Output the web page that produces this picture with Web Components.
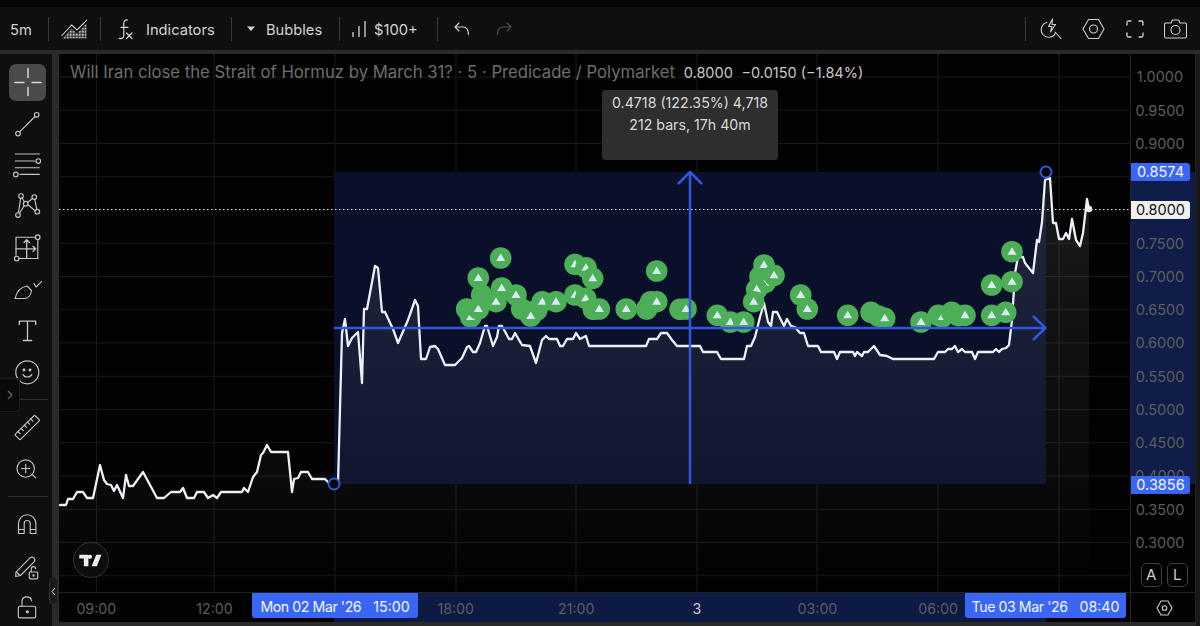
<!doctype html>
<html>
<head>
<meta charset="utf-8">
<title>Chart</title>
<style>
  html, body { margin: 0; height: 100%; background: #050505; overflow: hidden; }
  body { font-family: Inter, "Liberation Sans", sans-serif; }
</style>
</head>
<body>
<tv-app></tv-app>
<script>
const ico = (body, w = 37, h = 37) =>
  `<svg width="${w}" height="${h}" viewBox="0 0 ${w} ${h}" fill="none" stroke="currentColor" stroke-width="1.15" stroke-linecap="round" stroke-linejoin="round">${body}</svg>`

const toolIcons = {
  cross: '<path d="M19 4.500v9M19 23.500v8M6 18.500h9M23 18.500h9" stroke-width="1.500"/>',
  line: '<circle cx="27.700" cy="9.800" r="2.300"/><circle cx="9" cy="28.500" r="2.300"/><path d="M26 11.500 10.700 26.800"/>',
  fib: '<path d="M6.300 7h24M6.300 14h19.500M6.300 20.700h24M11 27.400h19.300"/><circle cx="29.300" cy="14" r="2.300"/><circle cx="6.800" cy="27.400" r="2.300"/>',
  pattern: '<circle cx="12" cy="8" r="2.300"/><circle cx="25.300" cy="9" r="2.300"/><circle cx="16.700" cy="15.700" r="2.300"/><circle cx="28.300" cy="23.700" r="2.300"/><circle cx="9" cy="27" r="2.300"/><path d="m13 10 2.500 3.700M23.500 10.500l-5 4M11.700 10.300 9.400 24.700M25.800 11.300l2 10M10.500 25l4.800-7.400M26.200 22.800l-7.400-6"/>',
  rect: '<path d="M26.500 7.200H7v18M9.800 28.500h19v-19"/><circle cx="28.700" cy="7.200" r="2.300"/><circle cx="7.700" cy="28.500" r="2.300"/><path d="M17.700 10v17.500M7 18.800h19.500M15 12.500l2.700-2.700 2.700 2.700M24 16.200l2.700 2.600-2.700 2.600" stroke-width="1.300"/>',
  brush: '<path d="M6 27.500c1.600-6.500 6-11.500 12-12.500l4.500 4.500c-.5 4.800-3.500 8-7.500 8z"/><path d="m25 12.500 2 3.500 5.700-5.700"/>',
  text: '<path d="M10.300 11.500V8.200h16.400v3.300M18.500 8.200v19.300M14.300 27.500h8.400" stroke-width="1.300"/>',
  smile: '<circle cx="18.300" cy="18.300" r="11.500"/><path d="M14 20.500c1.300 3.300 7.400 3.300 8.800 0"/><circle cx="15" cy="16" r=".9" fill="currentColor"/><circle cx="21" cy="16" r=".9" fill="currentColor"/>',
  ruler: '<g transform="rotate(-45 18.300 15.500)"><rect x="4.300" y="11.800" width="28" height="7.400" rx=".8"/><path d="M8.800 11.800v3M13.300 11.800v3M17.800 11.800v3M22.300 11.800v3M26.800 11.800v3"/></g>',
  zoom: '<circle cx="16.700" cy="19.500" r="8.700"/><path d="m23.300 25.500 3.400 3.300M16.700 15.300v8.400M12.500 19.500h8.400"/>',
  magnet: '<path d="M9.500 27.500V17.500a8.700 8.700 0 0 1 17.400 0v10h-5.700V17.500a3 3 0 0 0-6 0v10zM9.500 23.500h5.700M21.200 23.500h5.700"/>',
  pencil: '<path d="m7 24.200 14-14.300c1.400-1.300 3.100-.7 4 .3.900 1 1.200 2.600 0 3.700L11.500 27.500 6.700 28.500z"/><path d="M8 24.500l3 3"/><rect x="20.300" y="24" width="8.400" height="6.800" rx=".8"/><path d="M22.300 24v-3.200c0-2.800 4-2.800 4.300-.2"/><circle cx="24.500" cy="27.500" r=".6" fill="currentColor"/>',
  lock: '<rect x="9.300" y="17.200" width="17.400" height="11.700" rx="1.500"/><path d="M13 17v-5c0-5.500 9-5.500 9.500-.3"/><circle cx="18.300" cy="22.800" r="1" fill="currentColor"/>',
}

class TvTool extends HTMLElement {
  connectedCallback() {
    const name = this.getAttribute('icon')
    this.attachShadow({ mode: 'open' }).innerHTML = `
      <style>
        :host { display: block; width: 37px; height: 37px; color: #c4c4c4; border-radius: 7px; }
        :host([active]) { background: #4a4a4a; color: #d6d6d6; }
        svg { display: block; }
      </style>${ico(toolIcons[name])}`
  }
}

class TvSidebar extends HTMLElement {
  constructor() {
    super()
    const tool = n => `<tv-tool icon="${n}"${n === 'cross' ? ' active' : ''}></tv-tool>`
    this.attachShadow({ mode: 'open' }).innerHTML = `
      <style>
        :host { display: flex; flex-direction: column; width: 52px; padding: 9.500px 0 0 9px; box-sizing: border-box;
          background: #0f0f0f; position: relative; overflow: hidden; flex: none; }
        .group { display: flex; flex-direction: column; gap: 4.500px; }
        .tight { gap: 0; }
        hr { border: 0; height: 1px; background: #333; width: 40px; margin: 0 0 0 -1px; }
        .a { margin-top: 8px; margin-bottom: 12px; }
        .b { margin-top: 10px; margin-bottom: 10px; }
        .open { position: absolute; left: 0; top: 324px; width: 20px; height: 34px; box-sizing: border-box;
          background: #0a0a0a; border: 1px solid #1c1c1c; border-left: 0; border-radius: 0 3px 3px 0;
          display: flex; align-items: center; justify-content: center; color: #6a6a6a; }
      </style>
      <div class="group">${['cross','line','fib','pattern','rect','brush','text','smile'].map(tool).join('')}</div>
      <hr class="a">
      <div class="group tight">${['ruler','zoom'].map(tool).join('')}</div>
      <hr class="b">
      <div class="group">${['magnet','pencil','lock'].map(tool).join('')}</div>
      <div class="open"><svg width="8" height="10" viewBox="0 0 8 10" fill="none" stroke="currentColor" stroke-width="1.100"><path d="m2 1 4 4-4 4"/></svg></div>`
  }
}

class TvToolbar extends HTMLElement {
  constructor() {
    super()
    this.attachShadow({ mode: 'open' }).innerHTML = `
      <style>
        :host { display: flex; align-items: center; height: 43px; background: #0f0f0f; color: #d4d4d4;
          font: 14.700px/20px Inter, "Liberation Sans", sans-serif; padding-left: 10px; }
        i { display: block; width: 1px; height: 24px; background: #3a3a3a; flex: none; }
        svg { display: block; flex: none; }
        span { white-space: nowrap; margin-top: 2px; }
        .sp { flex: 1; }
      </style>
      <span style="width:22px">5m</span>
      <i style="margin-left:16px"></i>
      <svg style="margin-left:12px" width="26" height="20" viewBox="0 0 26 20" fill="none">
        <defs><pattern id="ht" width="1.500" height="1.500" patternUnits="userSpaceOnUse"><rect width="1" height="1" fill="#dcdcdc"/></pattern></defs>
        <path d="M1.500 19.500 10.700 9.500l5.300 5 9.500-10v15z" fill="url(#ht)"/>
        <path d="M.5 17 10.700 6 16 11 26 1" stroke="#d4d4d4" stroke-width="1.100"/>
      </svg>
      <i style="margin-left:13px"></i>
      <svg style="margin-left:17px" width="16" height="22" viewBox="0 0 16 22" fill="none" stroke="#d4d4d4" stroke-width="1.200" stroke-linecap="round">
        <path d="M9.500 2C7 1.500 6 3 5.800 5v12.500c0 2.500-2 3.500-4.500 2.800M3 9.300h7M8.500 15l5.500 5.500M14 15l-5.500 5.500"/>
      </svg>
      <span style="margin-left:12px;width:69px">Indicators</span>
      <i style="margin-left:16px"></i>
      <svg style="margin-left:15px" width="8" height="6" viewBox="0 0 8 6"><path d="M0 .5h8L4 5z" fill="#d4d4d4"/></svg>
      <span style="margin-left:11px;width:57px">Bubbles</span>
      <i style="margin-left:16px"></i>
      <svg style="margin-left:12px" width="14" height="18" viewBox="0 0 14 18" stroke="#d4d4d4" stroke-width="1.300" fill="none"><path d="M1 17v-5M7 17V6M13 17V1"/></svg>
      <span style="margin-left:8px;width:47px">$100+</span>
      <i style="margin-left:16px"></i>
      <svg style="margin-left:16px" width="16" height="14" viewBox="0 0 16 14" fill="none" stroke="#cfcfcf" stroke-width="1.100" stroke-linecap="round" stroke-linejoin="round"><path d="M5 1 1 5l4 4M1 5h8c3.500 0 5.500 2.500 5.500 7.500"/></svg>
      <svg style="margin-left:26px" width="16" height="14" viewBox="0 0 16 14" fill="none" stroke="#4c4c4c" stroke-width="1.100" stroke-linecap="round" stroke-linejoin="round"><path d="m11 1 4 4-4 4M15 5H7C3.500 5 1.500 7.500 1.500 12.500"/></svg>
      <div class="sp"></div>
      <i></i>
      <svg style="margin-left:14px" width="22" height="22" viewBox="0 0 22 22" fill="none" stroke="#cfcfcf" stroke-width="1.100" stroke-linecap="round" stroke-linejoin="round"><path d="M7 4.500a7.500 7.500 0 1 0 8.500 10.500M15 14l6 6.500"/><path d="M12.500 1 8.500 8.500h3.500L10.500 14l5-7.500H12z"/></svg>
      <svg style="margin-left:20px" width="23" height="22" viewBox="0 0 23 22" fill="none" stroke="#cfcfcf" stroke-width="1.100" stroke-linejoin="round"><path d="M6.500 1.500h10L22 11l-5.500 9.500h-10L1 11z"/><circle cx="11.500" cy="11" r="4"/></svg>
      <svg style="margin-left:21px" width="18" height="18" viewBox="0 0 18 18" fill="none" stroke="#cfcfcf" stroke-width="1.300" stroke-linecap="round"><path d="M1 5V2.500C1 1.500 1.500 1 2.500 1H5M13 1h2.500c1 0 1.500.5 1.500 1.500V5M17 13v2.500c0 1-.5 1.500-1.500 1.500H13M5 17H2.500C1.500 17 1 16.500 1 15.500V13"/></svg>
      <svg style="margin-left:20px;margin-right:13px" width="23" height="20" viewBox="0 0 23 20" fill="none" stroke="#cfcfcf" stroke-width="1.100" stroke-linejoin="round"><path d="M7 4 8.500 1h6L16 4h5c1 0 1.500.5 1.500 1.500v12c0 1-.5 1.500-1.500 1.500H2c-1 0-1.500-.5-1.500-1.500v-12C.5 4.500 1 4 2 4z"/><circle cx="11.500" cy="11" r="4.500"/></svg>`
  }
}

// chart data, in page pixels
const LINE = [[60,505],[66,505],[68,499],[73,499],[77,492],[83,492],[87,498],[93,498],[100,465],[104,480],[107,484],[111,485],[114,491],[117,485],[123,498],[126,475],[129,486],[133,486],[143,472],[157,498],[164,498],[171,492],[180,492],[183,488],[187,498],[194,498],[197,492],[204,492],[208,498],[213,495],[217,498],[221,492],[242,492],[244,488],[248,492],[253,477],[257,472],[261,455],[263,453],[267,445],[271,452],[288,452],[292,492],[294,479],[298,478],[301,472],[308,472],[312,479],[325,479],[330,484],[338,484],[342,333],[345,319],[348,346],[352,338],[358,332],[362,383],[364,309],[367,309],[375,266],[378,268],[382,312],[385,312],[393,329],[398,343],[408,320],[415,300],[418,306],[421,359],[426,359],[430,347],[435,346],[438,349],[445,365],[455,365],[462,358],[467,347],[469,346],[473,352],[476,352],[480,343],[485,326],[487,326],[493,346],[497,337],[499,326],[502,326],[509,339],[512,339],[515,333],[522,345],[530,346],[536,363],[542,340],[546,336],[549,339],[557,339],[560,346],[563,346],[567,339],[573,339],[576,333],[580,339],[586,336],[589,346],[646,346],[649,339],[657,339],[661,333],[667,333],[672,340],[677,346],[700,346],[703,352],[717,352],[721,359],[744,359],[747,346],[751,346],[755,337],[760,317],[764,303],[768,322],[771,326],[773,312],[777,312],[784,326],[787,319],[791,326],[795,327],[800,333],[804,333],[808,346],[818,346],[821,352],[834,352],[837,359],[840,352],[853,352],[855,356],[857,352],[862,356],[864,352],[868,352],[874,346],[880,355],[887,356],[893,359],[934,359],[938,352],[945,352],[948,349],[952,349],[955,346],[958,352],[962,349],[965,352],[972,352],[975,359],[978,352],[993,352],[996,349],[999,352],[1002,349],[1006,348],[1009,345],[1012,320],[1015,273],[1018,257],[1023,257],[1025,263],[1033,273],[1037,240],[1039,242],[1042,222],[1045,180],[1050,178],[1053,223],[1056,223],[1059,239],[1063,239],[1066,233],[1069,239],[1072,219],[1076,240],[1080,246],[1083,233],[1087,199],[1089,209]]

// x, y, and 0 where the marker's triangle sits under its neighbours
const BUBBLES = [[500.700,258],[478.300,278],[466.700,309,0],[470.700,317],[478.300,309],[481.700,295,0],[501.700,288],[496,301.700],[516,295],[521.700,309,0],[536.700,310,0],[530.700,316],[542.300,301.700],[556,301.700],[575,264.300],[586,267.700],[592.700,278.300],[575,295],[585.700,298.300],[593.300,309.300,0],[599.300,309],[626.300,309],[646.700,309,0],[650.700,301.700,0],[656.700,301.700],[656.700,271],[680,309.300,0],[686,309],[730.300,322],[717.300,315.300],[743.700,322],[760,276.700,0],[765,282.700],[756.700,289.300],[753.700,301.700],[764,265],[774,275.300],[800.700,295],[807.300,309],[847.700,315.300],[871,312.300,0],[878.300,316,0],[884.700,318.300],[938.300,315.300,0],[942.300,317],[951.700,312.300,0],[958.300,315.700,0],[965,315.300],[921,322],[991.700,285],[991.700,315.300],[1005.700,312.300],[1012,281.700],[1012,251.700]]

class TvPlot extends HTMLElement {
  constructor() {
    super()
    const pts = LINE.map(p => p.join(',')).join(' ')
    const grid = []
    for (let i = -1; i < 16; i++) { const y = 77 + i * 33.25; grid.push(`<path d="M59 ${y}H1131"/>`) }
    for (const x of [96.500, 214, 335, 456, 576, 697, 817, 938, 1059]) grid.push(`<path d="M${x} 54V592"/>`)
    const bubbles = BUBBLES.map(([x, y, tri]) => `
      <circle cx="${x}" cy="${y}" r="10.800" fill="#4caf58"/>
      ${tri === 0 ? '' : `<path d="M${x} ${y - 4.500}l4.500 7.500h-9z" fill="#dbe9f3"/>`}`).join('')
    this.attachShadow({ mode: 'open' }).innerHTML = `
      <style>
        :host { display: block; position: relative; flex: 1; background: #020202; overflow: hidden; }
        svg { display: block; }
        .legend { position: absolute; left: 11px; top: 8px; font-size: 16.700px; line-height: 20px; color: #6d6d6d; white-space: nowrap; }
        .legend b { font-weight: 400; color: #c9c9c9; font-size: 14.500px; margin-left: 4px; }
        .tip { position: absolute; left: 543px; top: 36px; width: 176px; height: 70px; box-sizing: border-box; padding-top: 2px;
          background: #2e2e2e; border-radius: 4px; color: #d9d9d9; font-size: 14.200px; line-height: 22px; text-align: center; }
        .logo { position: absolute; left: 14px; top: 488px; width: 36px; height: 36px; box-sizing: border-box; border-radius: 50%;
          border: 1.500px solid #333; background: #0d0d0d; display: flex; align-items: center; justify-content: center; }
      </style>
      <svg width="1072" height="538" viewBox="59 54 1072 538" fill="none">
        <defs>
          <linearGradient id="under" gradientUnits="userSpaceOnUse" x1="0" y1="170" x2="0" y2="592">
            <stop offset="0" stop-color="#fff" stop-opacity=".1"/>
            <stop offset=".45" stop-color="#fff" stop-opacity=".055"/>
            <stop offset=".75" stop-color="#fff" stop-opacity=".03"/>
            <stop offset="1" stop-color="#fff" stop-opacity="0"/>
          </linearGradient>
        </defs>
        <g stroke="#191919" stroke-width="1">${grid.join('')}</g>
        <rect x="334" y="172" width="712" height="312" fill="#0a112b" fill-opacity=".96"/>
        <polygon points="${pts} 1089,592 60,592" fill="url(#under)"/>
        <polyline points="${pts}" stroke="#eef0f8" stroke-width="2.300" stroke-linejoin="round" stroke-linecap="round"/>
        <circle cx="1089" cy="209" r="3.200" fill="#f2f2f2"/>
        ${bubbles}
        <g stroke="#3157e0" stroke-width="2.500" stroke-linejoin="round">
          <path d="M334 328H1045M1033 316l12.500 12-12.500 12"/>
          <path d="M690 484V173M678 184l12-12 12 12"/>
          <circle cx="334" cy="484" r="5.500" fill="#06060a" stroke-width="2"/>
          <circle cx="1046" cy="172" r="5.500" fill="#06060a" stroke-width="2"/>
        </g>
        <path d="M59 209.500H1131" stroke="#e8e8e8" stroke-width="1" stroke-dasharray="1.500 2.500"/>
      </svg>
      <div class="legend">Will Iran close the Strait of Hormuz by March 31? · 5 · Predicade / Polymarket <b>0.8000</b> <b>−0.0150 (−1.84%)</b></div>
      <div class="tip">0.4718 (122.35%) 4,718<br>212 bars, 17h 40m</div>
      <div class="logo"><svg width="24" height="13" viewBox="0 0 36 20" fill="#f0f0f0"><path d="M14 1H0v6h7v12h7zM27 19h-8l7-18h8zM16.500 7.500a3.200 3.200 0 1 0 0-6.400 3.200 3.200 0 0 0 0 6.400z"/></svg></div>`
  }
}

class TvPriceAxis extends HTMLElement {
  constructor() {
    super()
    const ticks = []
    // 0.85 always sits under the range label, its row stays empty
    for (let v = 100; v >= 30; v -= 5) ticks.push(`<div class="t">${v === 85 ? '' : (v / 100).toFixed(4)}</div>`)
    this.attachShadow({ mode: 'open' }).innerHTML = `
      <style>
        :host { display: block; position: relative; width: 66px; flex: none; box-sizing: border-box;
          background: #020202; border-left: 1px solid #222; border-right: 1px solid #222; padding-top: 6.400px;
          overflow: hidden; font-size: 14.500px; }
        .band { position: absolute; left: 0; right: 0; top: 118px; height: 312px; background: #0f1d48; }
        .list { position: relative; }
        .t { height: 33.250px; line-height: 33.250px; text-align: center; color: #5d5d5d; padding-right: 6px; }
        .lab { position: absolute; left: 0; width: 59px; height: 18px; line-height: 18px; text-align: center;
          border-radius: 0 3px 3px 0; background: #3a66f5; color: #f4f6ff; }
        .cur { background: #f0f0f0; color: #111; }
        .btn { position: absolute; top: 509px; width: 21px; height: 24px; box-sizing: border-box; border: 1px solid #3f3f3f;
          border-radius: 5px; color: #cdcdcd; text-align: center; line-height: 22px; font-size: 15px; }
      </style>
      <div class="band"></div>
      <div class="list">${ticks.join('')}</div>
      <div class="lab" style="top:109px">0.8574</div>
      <div class="lab cur" style="top:147px">0.8000</div>
      <div class="lab" style="top:422px">0.3856</div>
      <div class="btn" style="left:9.700px">A</div>
      <div class="btn" style="left:35.700px">L</div>`
  }
}

class TvTimeAxis extends HTMLElement {
  constructor() {
    super()
    const labels = ['09:00', '12:00', '', '18:00', '21:00', '3', '03:00', '06:00']
    const stamp = (d, t) => `<em>${d}</em><u>${t}</u>`
    this.attachShadow({ mode: 'open' }).innerHTML = `
      <style>
        :host { display: flex; position: relative; flex: 1; height: 30px; background: #020202; overflow: hidden;
          border-top: 1px solid #222; box-sizing: border-box; font-size: 14.200px; }
        .band { position: absolute; left: 275px; width: 712px; top: 0; bottom: 0; background: #0d1a44; }
        .row { display: flex; position: relative; margin-left: -23px; height: 29px; padding-top: 1px; align-items: center; box-sizing: border-box; }
        .row span { width: 120.600px; text-align: center; color: #5d5d5d; flex: none; }
        .row span:first-child { margin-right: -2.400px; }
        .row .day { color: #c9c9c9; }
        .lab { position: absolute; top: -1px; height: 26px; padding-top: 2px; box-sizing: border-box; line-height: 26px;
          background: #3a66f5; color: #f4f6ff; border-radius: 0 0 3px 3px; display: flex; justify-content: center; gap: 12px; }
        em { font-style: normal; letter-spacing: -.45px; }
        u { text-decoration: none; }
      </style>
      <div class="band"></div>
      <div class="row">${labels.map(l => `<span class="${l === '3' ? 'day' : ''}">${l}</span>`).join('')}</div>
      <div class="lab" style="left:193px;width:166px">${stamp("Mon 02 Mar '26", '15:00')}</div>
      <div class="lab" style="left:906px;width:161px">${stamp("Tue 03 Mar '26", '08:40')}</div>`
  }
}

class TvCorner extends HTMLElement {
  constructor() {
    super()
    this.attachShadow({ mode: 'open' }).innerHTML = `
      <style>
        :host { display: flex; width: 66px; height: 30px; flex: none; box-sizing: border-box; align-items: center; justify-content: center;
          background: #020202; border: 1px solid #222; border-bottom: 0; padding-left: 2px; }
      </style>
      <svg width="17" height="16" viewBox="0 0 17 16" fill="none" stroke="#cfcfcf" stroke-width="1.100" stroke-linejoin="round"><path d="M5 1h7l4 7-4 7H5L1 8z"/><circle cx="8.500" cy="8" r="2.300"/></svg>`
  }
}

class TvApp extends HTMLElement {
  constructor() {
    super()
    this.attachShadow({ mode: 'open' }).innerHTML = `
      <style>
        :host { display: grid; grid-template-rows: 7px 43px 4px 1fr; width: 1200px; height: 626px; background: #050505; overflow: hidden; }
        .gap { background: #2a2a2a; }
        .work { display: flex; min-height: 0; background: #2a2a2a; position: relative; }
        .main { margin-left: 7px; width: 1137px; display: flex; flex-direction: column; height: 568px; background: #020202; }
        .upper { display: flex; height: 538px; flex: none; }
        .lower { display: flex; height: 30px; flex: none; }
        .edge { flex: 1; background: #181818; }
        .hide { position: absolute; left: 49px; top: 523px; width: 9px; height: 28px; border-radius: 5px; background: #1a1a1a;
          border: 1px solid #2c2c2c; box-sizing: border-box; display: flex; align-items: center; justify-content: center; }
      </style>
      <div></div>
      <tv-toolbar></tv-toolbar>
      <div class="gap"></div>
      <div class="work">
        <tv-sidebar></tv-sidebar>
        <div class="main">
          <div class="upper"><tv-plot></tv-plot><tv-price-axis></tv-price-axis></div>
          <div class="lower"><tv-time-axis></tv-time-axis><tv-corner></tv-corner></div>
        </div>
        <div class="edge"></div>
        <div class="hide"><svg width="5" height="9" viewBox="0 0 5 9" fill="none" stroke="#d0d0d0" stroke-width="1"><path d="M4 1 1 4.500 4 8"/></svg></div>
      </div>`
  }
}

customElements.define('tv-tool', TvTool)
customElements.define('tv-sidebar', TvSidebar)
customElements.define('tv-toolbar', TvToolbar)
customElements.define('tv-plot', TvPlot)
customElements.define('tv-price-axis', TvPriceAxis)
customElements.define('tv-time-axis', TvTimeAxis)
customElements.define('tv-corner', TvCorner)
customElements.define('tv-app', TvApp)
</script>
</body>
</html>
